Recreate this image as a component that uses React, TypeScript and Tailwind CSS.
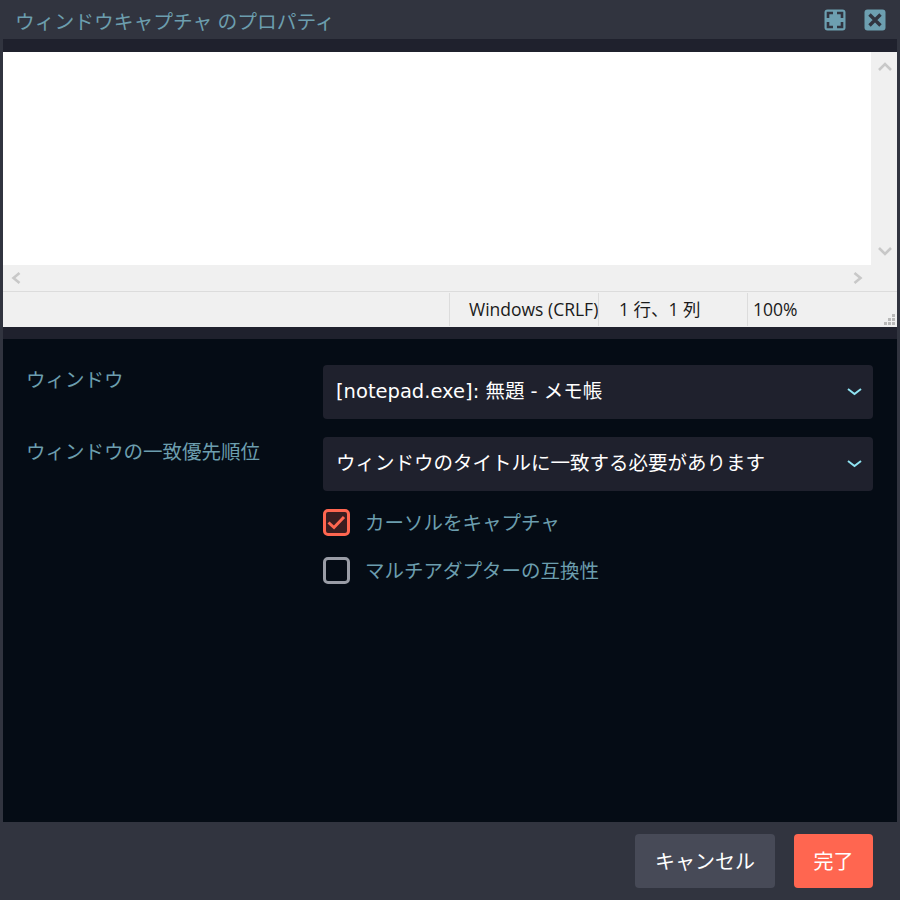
import React from "react";

function Chevron({ d, w, h, color, sw, className }: { d: string; w: number; h: number; color: string; sw: number; className?: string }) {
  return (
    <svg width={w} height={h} viewBox={`0 0 ${w} ${h}`} className={className}>
      <path d={d} fill="none" stroke={color} strokeWidth={sw} />
    </svg>
  );
}

function Select({ label }: { label: string }) {
  return (
    <div className="flex h-[54px] items-center justify-between rounded-[4px] bg-[#1f212d] pl-[13px] pr-[11px] text-[19.5px] text-white">
      <span className="relative top-[-1px] font-['DejaVu_Sans','Noto_Sans_CJK_JP',sans-serif] leading-[29px]">{label}</span>
      <Chevron d="M1 1l6.5 5L14 1" w={15} h={8} color="#8fe3f2" sw={2} />
    </div>
  );
}

export default function App() {
  return (
    <div className="flex h-[900px] w-[900px] flex-col bg-[#31343f] font-['Open_Sans','Noto_Sans_CJK_JP',sans-serif]">
      <div className="flex h-[39px] items-center justify-between pl-[15px] pr-[14px]">
        <span className="relative top-[2px] text-[19.75px] text-[#6c9eae]">ウィンドウキャプチャ のプロパティ</span>
        <div className="flex items-center gap-[18px]">
          <svg width="22" height="22" viewBox="0 0 22 22">
            <rect x="0.5" y="0.5" width="21" height="21" rx="3" fill="#6d9fb0" />
            <path d="M4 9V4h5M13 4h5v5M18 13v5h-5M9 18H4v-5" fill="none" stroke="#31343f" strokeWidth="2.6" />
          </svg>
          <svg width="22" height="22" viewBox="0 0 22 22">
            <rect x="0.5" y="0.5" width="21" height="21" rx="3" fill="#6d9fb0" />
            <path d="M5.5 5.5l11 11M16.5 5.5l-11 11" fill="none" stroke="#31343f" strokeWidth="3.4" />
          </svg>
        </div>
      </div>
      <div className="flex flex-1 flex-col border-x-[3px] border-[#31343f] bg-[#050c15]">
        <div className="flex h-[288px] flex-col bg-[#1f212d] pt-[13px]">
          <div className="flex flex-1 flex-col bg-[#f0f0f0]">
            <div className="flex flex-1">
              <div className="flex-1 bg-white" />
              <div className="flex w-[26px] flex-col items-center justify-between pb-[9px] pt-[10px] pl-[1px]">
                <Chevron d="M1 8l6-6 6 6" w={14} h={10} color="#c8c8c8" sw={2.6} />
                <Chevron d="M1 2l6 6 6-6" w={14} h={10} color="#c8c8c8" sw={2.6} />
              </div>
            </div>
            <div className="flex h-[26px] items-center justify-between pl-[8px] pr-[34px]">
              <Chevron d="M8.5 1L2.5 6l6 5" w={10} h={12} color="#c8c8c8" sw={2.6} />
              <Chevron d="M1.5 1l6 5-6 5" w={10} h={12} color="#c8c8c8" sw={2.6} />
            </div>
            <div className="relative flex h-[36px] items-stretch border-t border-[#dcdcdc] py-[1px] text-[17.5px] text-[#1a1a1a]">
              <div className="w-[446px]" />
              <div className="flex w-[149px] items-center overflow-hidden whitespace-nowrap border-l border-[#dcdcdc] pl-[19px]">Windows (CRLF)</div>
              <div className="flex w-[149px] items-center border-l border-[#dcdcdc] pl-[20px]">1 行、1 列</div>
              <div className="flex flex-1 items-center border-l border-[#dcdcdc] pl-[5px]">100%</div>
              <svg width="11" height="11" viewBox="0 0 11 11" className="absolute bottom-[2px] right-[2px]" fill="#b9b9b9">
                <rect x="8" y="0" width="3" height="3" />
                <rect x="4" y="4" width="3" height="3" />
                <rect x="8" y="4" width="3" height="3" />
                <rect x="0" y="8" width="3" height="3" />
                <rect x="4" y="8" width="3" height="3" />
                <rect x="8" y="8" width="3" height="3" />
              </svg>
            </div>
          </div>
        </div>
        <div className="h-[12px] bg-[#1f212d]" />
        <div className="flex flex-1 pr-[24px] pt-[26px]">
          <div className="w-[320px] pl-[23px] text-[19.5px] text-[#6c9eae]">
            <div className="h-[72px]">ウィンドウ</div>
            <div>ウィンドウの一致優先順位</div>
          </div>
          <div className="flex flex-1 flex-col">
            <Select label="[notepad.exe]: 無題 - メモ帳" />
            <div className="h-[18px]" />
            <Select label="ウィンドウのタイトルに一致する必要があります" />
            <div className="mt-[18px] flex items-center gap-[15px] text-[19.5px] leading-[27px] text-[#6c9eae]">
              <span className="flex h-[27px] w-[27px] items-center justify-center rounded-[5px] border-[3px] border-[#ff6650] bg-[#3a1d20]">
                <svg width="19" height="15" viewBox="0 0 19 15">
                  <path d="M1.5 7.5l5.5 5L17 2" fill="none" stroke="#ff6650" strokeWidth="3" />
                </svg>
              </span>
              カーソルをキャプチャ
            </div>
            <div className="mt-[21px] flex items-center gap-[15px] text-[19.5px] leading-[27px] text-[#6c9eae]">
              <span className="h-[27px] w-[27px] rounded-[5px] border-[3px] border-[#9a9da6]" />
              マルチアダプターの互換性
            </div>
          </div>
        </div>
      </div>
      <div className="flex h-[78px] items-center justify-end gap-[19px] pr-[27px]">
        <div className="flex h-[54px] w-[140px] items-center justify-center rounded-[4px] bg-[#474a57] pt-[2px] text-[20px] text-white">キャンセル</div>
        <div className="flex h-[54px] w-[79px] items-center justify-center rounded-[4px] bg-[#ff6650] pt-[2px] text-[20px] text-white">完了</div>
      </div>
    </div>
  );
}
